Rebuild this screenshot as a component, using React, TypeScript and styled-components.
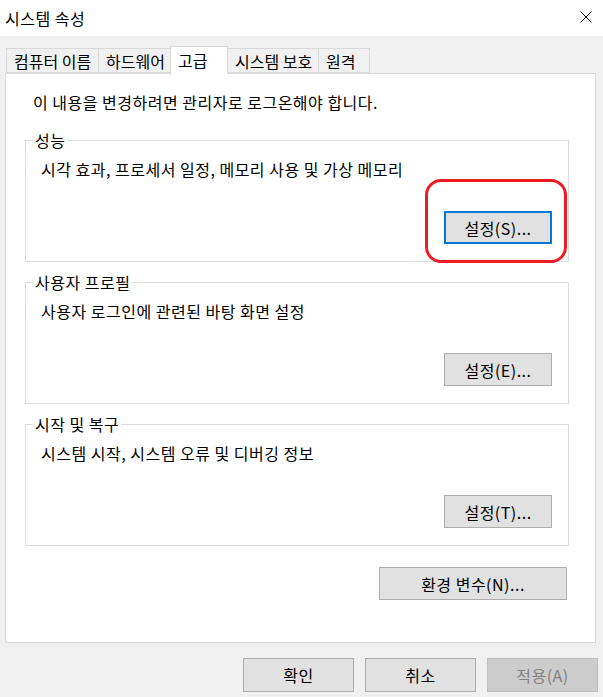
import React from "react";
import styled, { createGlobalStyle } from "styled-components";

const GlobalStyle = createGlobalStyle`
    html, body {
        margin: 0;
        padding: 0;
        background: #f0f0f0;
    }
    body {
        font-family: "Noto Sans CJK KR", "Noto Sans", "Liberation Sans", sans-serif;
        font-size: 16px;
        letter-spacing: 0.5px;
        color: #000;
    }
`;

const TABS = [
    { label: "컴퓨터 이름", width: 93 },
    { label: "하드웨어", width: 73 },
    { label: "고급", width: 58, active: true },
    { label: "시스템 보호", width: 92 },
    { label: "원격", width: 52 },
];

const GROUPS = [
    {
        title: "성능",
        text: "시각 효과, 프로세서 일정, 메모리 사용 및 가상 메모리",
        button: "설정(S)...",
        focused: true,
    },
    {
        title: "사용자 프로필",
        text: "사용자 로그인에 관련된 바탕 화면 설정",
        button: "설정(E)...",
    },
    {
        title: "시작 및 복구",
        text: "시스템 시작, 시스템 오류 및 디버깅 정보",
        button: "설정(T)...",
    },
];

export default function App() {
    return (
        <>
            <GlobalStyle />
            <Window>
                <TitleBar>
                    <Title>시스템 속성</Title>
                    <CloseButton aria-label="닫기">
                        <svg width="12" height="12" viewBox="0 0 12 12">
                            <path
                                d="M0.5 0.5 L11.5 11.5 M11.5 0.5 L0.5 11.5"
                                stroke="#000"
                                strokeWidth="1"
                                fill="none"
                            />
                        </svg>
                    </CloseButton>
                </TitleBar>
                <Body>
                    <TabStrip>
                        {TABS.map((t) => (
                            <Tab key={t.label} $width={t.width} $active={!!t.active}>
                                {t.label}
                            </Tab>
                        ))}
                    </TabStrip>
                    <Panel>
                        <Notice>이 내용을 변경하려면 관리자로 로그온해야 합니다.</Notice>
                        {GROUPS.map((g) => (
                            <GroupBox key={g.title}>
                                <Legend>{g.title}</Legend>
                                <GroupText>{g.text}</GroupText>
                                <ButtonRow>
                                    <HighlightWrap>
                                        <Button $width={108} $focused={!!g.focused}>
                                            {g.button}
                                        </Button>
                                        {g.focused && <Highlight />}
                                    </HighlightWrap>
                                </ButtonRow>
                            </GroupBox>
                        ))}
                        <EnvRow>
                            <Button $width={188}>환경 변수(N)...</Button>
                        </EnvRow>
                    </Panel>
                    <Footer>
                        <FooterButton>확인</FooterButton>
                        <FooterButton>취소</FooterButton>
                        <FooterButton disabled>적용(A)</FooterButton>
                    </Footer>
                </Body>
            </Window>
        </>
    );
}

const Window = styled.div`
    width: 603px;
    height: 697px;
    display: flex;
    flex-direction: column;
    background: #f0f0f0;
    overflow: hidden;
`;

const TitleBar = styled.div`
    height: 36px;
    background: #fff;
    display: flex;
    align-items: center;
    justify-content: space-between;
    padding: 0 11px 0 5px;
    box-sizing: border-box;
`;

const Title = styled.span`
    line-height: 20px;
    margin-top: -1px;
`;

const CloseButton = styled.span`
    display: flex;
    width: 12px;
    height: 12px;
    margin-top: -2px;
`;

const Body = styled.div`
    padding: 10px 7px 0 5px;
    display: flex;
    flex-direction: column;
`;

const TabStrip = styled.div`
    display: flex;
    align-items: flex-end;
    height: 27px;
    padding-left: 1px;
`;

const Tab = styled.div<{ $width: number; $active: boolean }>`
    box-sizing: border-box;
    width: ${(p) => p.$width}px;
    height: ${(p) => (p.$active ? 28 : 25)}px;
    margin-left: -1px;
    margin-bottom: ${(p) => (p.$active ? -1 : 0)}px;
    border: 1px solid #d9d9d9;
    border-bottom: ${(p) => (p.$active ? "none" : "1px solid #d9d9d9")};
    background: ${(p) => (p.$active ? "#fff" : "#f0f0f0")};
    z-index: ${(p) => (p.$active ? 1 : 0)};
    display: flex;
    align-items: center;
    padding: ${(p) => (p.$active ? "0 0 2px 7px" : "0 0 0 7px")};
    white-space: nowrap;
    line-height: 20px;
    letter-spacing: 0;

    &:first-child {
        margin-left: 0;
    }
`;

const Panel = styled.div`
    box-sizing: border-box;
    height: 570px;
    background: #fff;
    border: 1px solid #d9d9d9;
    padding: 18px 26px 0 19px;
    display: flex;
    flex-direction: column;
`;

const Notice = styled.div`
    line-height: 20px;
    margin-left: 8px;
    margin-bottom: 18px;
`;

const GroupBox = styled.fieldset`
    margin: 0;
    padding: 0 16px 17px 15px;
    border: 1px solid #dcdcdc;
    min-width: 0;
    display: flex;
    flex-direction: column;

    & + & {
        margin-top: 10px;
    }
`;

const Legend = styled.legend`
    padding: 0 2px;
    margin-left: -8px;
    line-height: 20px;
`;

const GroupText = styled.div`
    line-height: 20px;
    margin-top: 9px;
`;

const ButtonRow = styled.div`
    display: flex;
    justify-content: flex-end;
    margin-top: 32px;
`;

const HighlightWrap = styled.div`
    position: relative;
    display: flex;
`;

const Highlight = styled.span`
    position: absolute;
    top: -32px;
    left: -19px;
    right: -15px;
    bottom: -19px;
    border: 3px solid #ed1c24;
    border-radius: 16px;
    pointer-events: none;
`;

const Button = styled.button<{ $width: number; $focused?: boolean }>`
    box-sizing: border-box;
    width: ${(p) => p.$width}px;
    height: 33px;
    padding: 0;
    font: inherit;
    letter-spacing: inherit;
    line-height: 20px;
    color: #000;
    background: #e1e1e1;
    border: ${(p) => (p.$focused ? "2px solid #0078d7" : "1px solid #adadad")};
    border-radius: 0;
`;

const EnvRow = styled.div`
    display: flex;
    justify-content: flex-end;
    margin-top: 21px;
    margin-right: 2px;
`;

const Footer = styled.div`
    display: flex;
    justify-content: flex-end;
    gap: 11px;
    margin-top: 15px;
    margin-right: -2px;
`;

const FooterButton = styled.button`
    box-sizing: border-box;
    width: 111px;
    height: 34px;
    padding: 0;
    font: inherit;
    letter-spacing: inherit;
    line-height: 20px;
    color: #000;
    background: #e1e1e1;
    border: 1px solid #adadad;
    border-radius: 0;

    &:disabled {
        background: #cccccc;
        border-color: #bfbfbf;
        color: #838383;
    }
`;
